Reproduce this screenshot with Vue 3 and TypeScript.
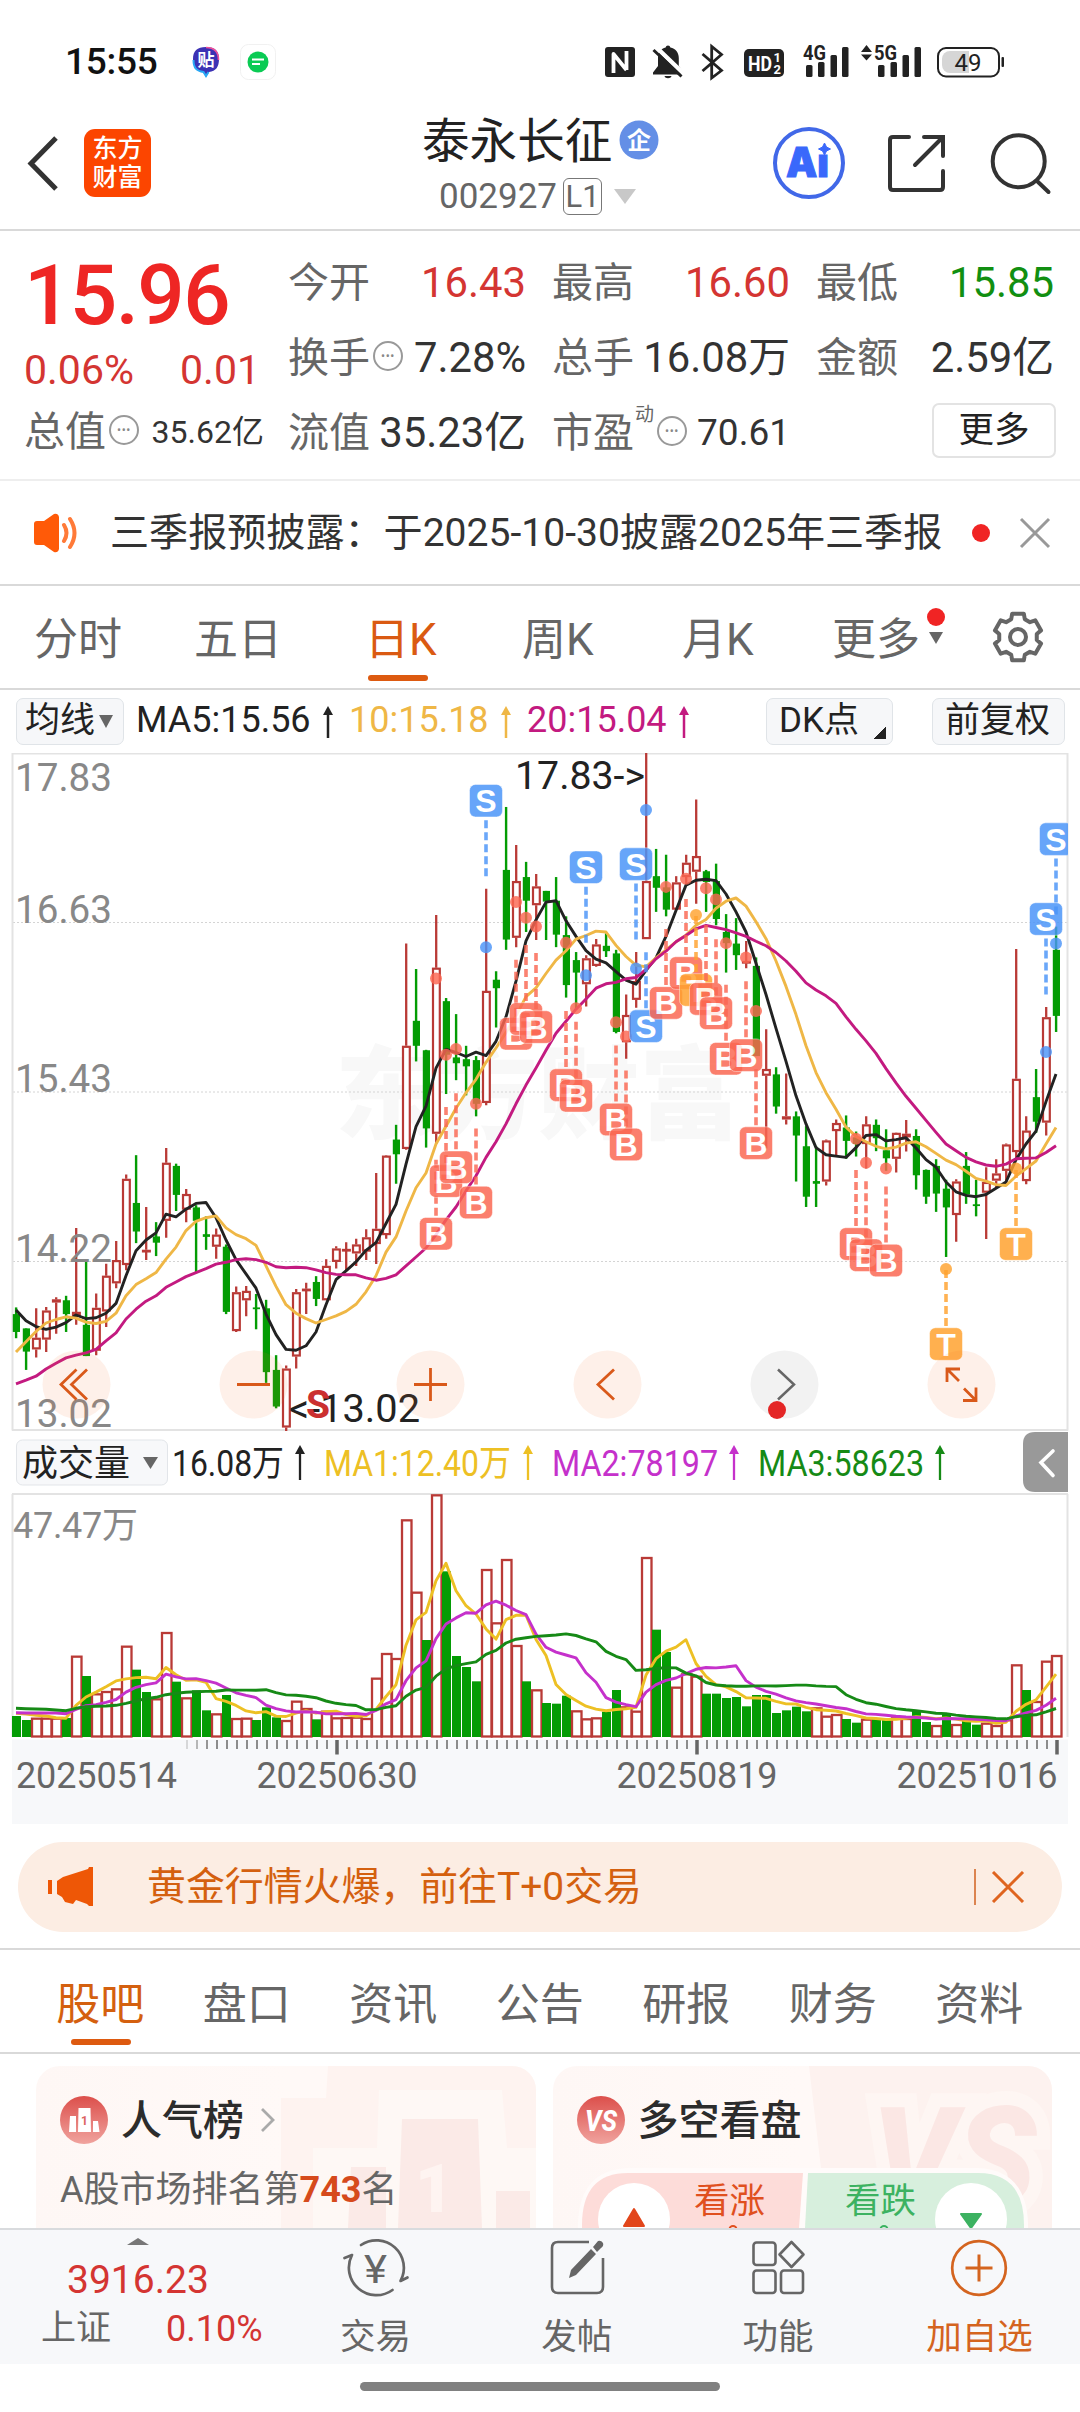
<script setup lang="ts">
type Kind = 'R' | 'G'
type Candle = [kind: Kind, high: number, top: number, bottom: number, low: number]
type Mark = { i: number; dot: number; at: number; t: 'B' | 'S' | 'T'; up?: boolean }

const candles: Candle[] = [
  ['G', 1271, 1286, 1326, 1340], ['G', 1318, 1318, 1370, 1411], ['R', 1273, 1339, 1365, 1383], ['R', 1270, 1278, 1343, 1371],
  ['R', 1248, 1253, 1260, 1330], ['G', 1245, 1255, 1286, 1326], ['R', 1093, 1281, 1290, 1310], ['G', 1168, 1310, 1380, 1380],
  ['R', 1240, 1272, 1368, 1378], ['R', 1173, 1200, 1280, 1315], ['R', 1122, 1165, 1217, 1228], ['R', 973, 983, 1176, 1188],
  ['G', 930, 1037, 1101, 1127], ['R', 1046, 1142, 1147, 1165], ['G', 1080, 1112, 1126, 1156], ['R', 914, 947, 1077, 1115],
  ['G', 949, 954, 1019, 1055], ['R', 1006, 1017, 1052, 1080], ['G', 1042, 1047, 1077, 1193], ['G', 1067, 1107, 1113, 1142],
  ['R', 1094, 1108, 1135, 1162], ['G', 1130, 1135, 1281, 1286], ['R', 1224, 1237, 1324, 1326], ['R', 1223, 1234, 1255, 1291],
  ['G', 1241, 1271, 1275, 1320], ['G', 1254, 1273, 1416, 1440], ['G', 1378, 1411, 1493, 1497], ['R', 1401, 1408, 1540, 1548],
  ['R', 1230, 1237, 1381, 1408], ['R', 1216, 1229, 1233, 1286], ['G', 1201, 1214, 1252, 1268], ['R', 1163, 1178, 1255, 1255],
  ['R', 1134, 1139, 1169, 1184], ['R', 1125, 1140, 1144, 1190], ['R', 1117, 1130, 1150, 1178], ['R', 1096, 1114, 1146, 1165],
  ['R', 970, 1095, 1129, 1174], ['R', 930, 931, 1109, 1117], ['G', 862, 895, 928, 994], ['R', 456, 685, 916, 918],
  ['G', 513, 629, 685, 720], ['G', 694, 695, 870, 913], ['R', 392, 510, 882, 905], ['G', 578, 585, 705, 793],
  ['G', 614, 711, 724, 762], ['G', 685, 715, 731, 796], ['G', 708, 717, 815, 843], ['R', 333, 562, 813, 818],
  ['G', 518, 537, 556, 644], ['G', 150, 291, 447, 470], ['R', 235, 316, 443, 464], ['G', 273, 307, 360, 430],
  ['R', 300, 328, 370, 448], ['G', 338, 338, 362, 448], ['G', 307, 360, 436, 464], ['G', 395, 437, 549, 577],
  ['G', 475, 493, 521, 602], ['R', 482, 489, 547, 597], ['R', 446, 458, 506, 508], ['G', 433, 461, 473, 486],
  ['G', 470, 478, 654, 657], ['R', 570, 616, 677, 714], ['R', 475, 540, 582, 600], ['R', 28, 316, 446, 446],
  ['G', 244, 305, 331, 385], ['G', 257, 330, 380, 395], ['R', 305, 319, 380, 380], ['R', 257, 275, 307, 322],
  ['R', 133, 260, 295, 367], ['G', 291, 294, 318, 385], ['G', 277, 316, 401, 415], ['G', 390, 430, 455, 521],
  ['G', 399, 456, 482, 515], ['R', 450, 495, 500, 511], ['G', 487, 506, 708, 708], ['R', 648, 737, 752, 915],
  ['G', 733, 749, 821, 837], ['R', 747, 843, 850, 861], ['G', 832, 843, 886, 989], ['G', 865, 910, 1023, 1046],
  ['G', 910, 988, 994, 1046], ['R', 895, 897, 989, 998], ['R', 850, 858, 876, 930], ['G', 841, 868, 898, 938],
  ['G', 877, 890, 905, 933], ['R', 843, 861, 905, 960], ['G', 850, 862, 892, 921], ['G', 872, 919, 937, 965],
  ['R', 879, 880, 938, 969], ['R', 851, 882, 890, 922], ['G', 872, 887, 975, 1007], ['G', 962, 963, 1023, 1039],
  ['G', 939, 954, 1016, 1057], ['G', 985, 1005, 1047, 1158], ['R', 984, 989, 1064, 1124], ['G', 923, 954, 1018, 1039],
  ['G', 985, 1040, 1044, 1067], ['R', 957, 990, 1014, 1118], ['R', 939, 971, 987, 1003], ['R', 904, 906, 965, 995],
  ['R', 468, 759, 923, 940], ['R', 843, 875, 988, 995], ['G', 737, 800, 855, 880], ['R', 598, 621, 857, 886],
  ['G', 418, 470, 618, 654],
]

const ma5 = [1277, 1301, 1314, 1320, 1315, 1305, 1288, 1296, 1294, 1284, 1262, 1200, 1144, 1120, 1104, 1062, 1068, 1051, 1038, 1036, 1070, 1120, 1164, 1196, 1228, 1286, 1332, 1365, 1367, 1357, 1326, 1265, 1209, 1189, 1169, 1143, 1126, 1083, 1040, 950, 866, 820, 735, 693, 700, 709, 699, 707, 675, 620, 540, 450, 403, 363, 360, 405, 440, 472, 491, 499, 519, 538, 547, 516, 488, 440, 382, 325, 314, 312, 315, 345, 385, 430, 500, 570, 646, 720, 797, 860, 913, 929, 932, 935, 913, 886, 884, 898, 895, 891, 914, 940, 957, 990, 1012, 1020, 1023, 1018, 1004, 990, 940, 905, 876, 810, 748]
const ma10 = [1371, 1348, 1325, 1306, 1298, 1292, 1295, 1304, 1307, 1302, 1284, 1245, 1220, 1207, 1193, 1163, 1136, 1099, 1078, 1070, 1066, 1093, 1108, 1117, 1132, 1178, 1224, 1265, 1284, 1296, 1306, 1298, 1290, 1280, 1264, 1236, 1200, 1147, 1113, 1055, 1003, 970, 905, 865, 825, 790, 760, 722, 690, 655, 618, 575, 555, 523, 493, 472, 446, 438, 428, 430, 460, 485, 505, 508, 488, 470, 452, 437, 415, 402, 377, 361, 354, 372, 407, 445, 495, 552, 615, 685, 745, 790, 827, 867, 888, 900, 910, 916, 912, 903, 900, 911, 926, 941, 951, 966, 982, 988, 996, 998, 977, 960, 943, 905, 868]
const ma20 = [1442, 1434, 1425, 1409, 1396, 1384, 1378, 1373, 1365, 1346, 1328, 1297, 1275, 1257, 1245, 1226, 1214, 1202, 1193, 1184, 1174, 1170, 1164, 1162, 1164, 1170, 1180, 1182, 1181, 1182, 1187, 1193, 1197, 1198, 1198, 1205, 1210, 1206, 1198, 1178, 1158, 1138, 1108, 1075, 1046, 1010, 976, 935, 900, 860, 815, 773, 735, 695, 657, 630, 603, 580, 556, 546, 543, 535, 532, 514, 490, 473, 452, 438, 423, 415, 420, 425, 432, 440, 451, 461, 476, 495, 518, 544, 560, 573, 590, 620, 648, 674, 702, 736, 768, 798, 825, 852, 879, 905, 920, 935, 945, 952, 955, 950, 938, 937, 936, 924, 909]

const marks: Mark[] = [
  { i: 42, dot: 534, at: 1106, t: 'B' }, { i: 43, dot: 705, at: 988, t: 'B' }, { i: 44, dot: 692, at: 957, t: 'B' },
  { i: 46, dot: 815, at: 1036, t: 'B' }, { i: 47, dot: 464, at: 136, t: 'S', up: true },
  { i: 50, dot: 363, at: 658, t: 'B' }, { i: 51, dot: 398, at: 625, t: 'B' }, { i: 52, dot: 418, at: 643, t: 'B' },
  { i: 55, dot: 454, at: 773, t: 'B' }, { i: 56, dot: 601, at: 797, t: 'B' }, { i: 57, dot: 527, at: 285, t: 'S', up: true },
  { i: 60, dot: 632, at: 850, t: 'B' }, { i: 61, dot: 664, at: 906, t: 'B' }, { i: 62, dot: 512, at: 278, t: 'S', up: true },
  { i: 63, dot: 157, at: 641, t: 'S' }, { i: 65, dot: 329, at: 589, t: 'B' }, { i: 67, dot: 311, at: 522, t: 'B' },
  { i: 68, dot: 392, at: 560, t: 'T' }, { i: 69, dot: 332, at: 580, t: 'B' }, { i: 70, dot: 357, at: 612, t: 'B' },
  { i: 71, dot: 455, at: 714, t: 'B' }, { i: 73, dot: 487, at: 706, t: 'B' }, { i: 74, dot: 607, at: 903, t: 'B' },
  { i: 84, dot: 893, at: 1129, t: 'B' }, { i: 85, dot: 947, at: 1154, t: 'B' }, { i: 87, dot: 960, at: 1166, t: 'B' },
  { i: 93, dot: 1185, at: 1353, t: 'T' }, { i: 100, dot: 960, at: 1129, t: 'T' },
  { i: 103, dot: 699, at: 401, t: 'S', up: true }, { i: 104, dot: 456, at: 222, t: 'S', up: true },
]
const markColor = { B: '#fb6752', S: '#4a94f8', T: '#ffa22e' }

const volTops = [858, 870, 863, 863, 863, 864, 677, 738, 790, 783, 775, 647, 719, 786, 805, 606, 755, 802, 781, 841, 850, 795, 864, 863, 870, 832, 862, 870, 812, 834, 868, 842, 862, 861, 860, 864, 743, 669, 684, 268, 485, 630, 193, 424, 678, 711, 754, 417, 577, 387, 645, 754, 778, 819, 821, 797, 841, 865, 862, 845, 780, 829, 842, 381, 599, 666, 770, 730, 737, 791, 791, 804, 801, 829, 795, 795, 849, 841, 830, 844, 832, 857, 852, 867, 878, 866, 865, 867, 862, 864, 843, 876, 885, 850, 882, 870, 884, 878, 885, 868, 703, 780, 813, 692, 675]
const volKinds = 'GGRRRGRGRRRRGGRRGRGGRGRRGGGRRRGRRRRRRRRRRGRGGGGRRRRGRGGGRRRGGRRRGGRRRGGGGGGGGGGGRRRGGRGGRRGGRGRGGRRRRGRRR'

const X = (i: number) => 16 + i * 10
const Y = (v: number) => 740 + v / 2.24
const V = (v: number) => 1430 + v / 3
const line = (a: number[], f: (v: number) => number) => a.map((v, i) => `${X(i)},${f(v).toFixed(1)}`).join(' ')

function volAverage(n: number, lead: number[]): number[] {
  return volTops.map((_, i) =>
    i < n - 1 ? lead[i] : volTops.slice(i - n + 1, i + 1).reduce((a, b) => a + b, 0) / n,
  )
}
const vma1 = volAverage(5, [850, 852, 856, 858])
const vma2 = volAverage(10, [848, 849, 849, 849, 849, 851, 838, 827, 824])
const vma3 = volAverage(20, [835, 836, 837, 838, 840, 842, 835, 830, 829, 828, 826, 820, 813, 806, 802, 794, 790, 787, 785])

const ticks = Array.from({ length: 88 }, (_, k) => k + 17)
const gridLabels = [
  { t: '17.83', y: 791 }, { t: '16.63', y: 923 }, { t: '15.43', y: 1092 }, { t: '14.22', y: 1261.5 }, { t: '13.02', y: 1427 },
]
const legend = [
  { t: '16.08万', x: 172, w: 112, c: '#222', a: 300 },
  { t: 'MA1:12.40万', x: 324, w: 187, c: '#edc024', a: 528 },
  { t: 'MA2:78197', x: 552, w: 166, c: '#c531cb', a: 734 },
  { t: 'MA3:58623', x: 758, w: 166, c: '#168a16', a: 940 },
]

const gear = Array.from({ length: 6 }, (_, k) => {
  const p = (r: number, d: number) => {
    const a = ((-90 + 60 * k + d) * Math.PI) / 180
    return `${(27 + r * Math.cos(a)).toFixed(2)},${(27 + r * Math.sin(a)).toFixed(2)}`
  }
  return [p(19, -21), p(24, -14), p(24, 14), p(19, 21)].join(' ')
}).join(' ')

const periods = ['分时', '五日', '日K', '周K', '月K']
const sections = ['股吧', '盘口', '资讯', '公告', '研报', '财务', '资料']
</script>

<template>
  <div class="app">
    <div class="status">
      <span class="clock">15:55</span>
      <svg class="tie" width="28" height="32" viewBox="0 0 28 32">
        <path d="M14 1C5 1 1 5 1 13c0 8 3 12 10 13l3 5 3-5c7-1 10-5 10-13C27 5 23 1 14 1z" fill="#3c32b4" />
        <path d="M14 1.500C22 1.500 26.500 6 26.500 14" fill="none" stroke="#ee4f9a" stroke-width="1.600" />
        <path d="M1.500 14c0 8 3 11 10 12l2.500 4 2.500-4" fill="none" stroke="#29a8f5" stroke-width="2" />
        <text x="14" y="20" text-anchor="middle" font-size="17" font-weight="700" fill="#fff">贴</text>
      </svg>
      <svg class="msg" width="36" height="36" viewBox="0 0 36 36">
        <rect x=".5" y=".5" width="35" height="35" rx="8" fill="#fff" stroke="#f1f1f1" />
        <circle cx="18" cy="18" r="10.500" fill="#0acb54" />
        <path d="M12 15.500h12M12 20h8" stroke="#fff" stroke-width="1.800" />
      </svg>
      <svg class="sys" width="410" height="44" viewBox="600 40 410 44">
        <rect x="605" y="47" width="30" height="30" rx="3" fill="#222" />
        <path d="M613.500 73V54l13 16M626.500 51v19" fill="none" stroke="#fff" stroke-width="3.800" stroke-linejoin="round" />
        <path d="M668 45.500a2.500 2.500 0 0 1 2.400 2c5 1 8.400 5 8.400 10.500v8l5 6.500v2H653v-2l5-6.500v-8c0-5.500 3.200-9.500 7.600-10.500a2.500 2.500 0 0 1 2.400-2zM664.500 76h7c-.6 3-6.400 3-7 0z" fill="#222" />
        <path d="M656 47l29 28" stroke="#fff" stroke-width="4.500" />
        <path d="M653.500 50l28 26.500" stroke="#222" stroke-width="3" />
        <path d="M702.500 54l19 16.500-9.800 7.500V46.500l9.800 8L702.500 71" fill="none" stroke="#222" stroke-width="2.800" />
        <rect x="744" y="49" width="40" height="28" rx="5" fill="#222" />
        <text x="748" y="71" font-size="21" font-weight="700" fill="#fff" textLength="24" lengthAdjust="spacingAndGlyphs">HD</text>
        <text x="773.500" y="62" font-size="13" font-weight="700" fill="#fff">1</text>
        <text x="773.500" y="74" font-size="13" font-weight="700" fill="#fff">2</text>
        <g fill="#222">
          <text x="803" y="60" font-size="19.500" font-weight="700" textLength="23" lengthAdjust="spacingAndGlyphs">4G</text>
          <rect x="806" y="65" width="6.500" height="12" rx="1.500" /><rect x="818" y="62" width="6.500" height="15" rx="1.500" />
          <rect x="830.500" y="55" width="6.500" height="22" rx="1.500" /><rect x="842" y="47" width="6.500" height="30" rx="1.500" />
          <path d="M861 52l5.500-7 5.500 7zM861 54.500h11l-5.500 6z" />
          <text x="874" y="60" font-size="19.500" font-weight="700" textLength="23" lengthAdjust="spacingAndGlyphs">5G</text>
          <rect x="878" y="65" width="6.500" height="12" rx="1.500" /><rect x="890.500" y="62" width="6.500" height="15" rx="1.500" />
          <rect x="902.500" y="55" width="6.500" height="22" rx="1.500" /><rect x="914.500" y="47" width="6.500" height="30" rx="1.500" />
          <rect x="1001.500" y="57" width="2.500" height="10" rx="1" />
        </g>
        <path d="M969 51h-19a8 8 0 0 0-8 8v6a8 8 0 0 0 8 8h19z" fill="#d6d6d6" />
        <rect x="938" y="48" width="61" height="28.500" rx="8" fill="none" stroke="#222" stroke-width="2" />
        <text x="968" y="71" text-anchor="middle" font-size="24" fill="#222">49</text>
      </svg>
    </div>

    <header class="top">
      <svg class="back" width="34" height="58" viewBox="0 0 34 58"><path d="M30 4L5 29.500 30 55" fill="none" stroke="#333" stroke-width="5" /></svg>
      <div class="logo"><span>东方</span><span>财富</span></div>
      <div class="title">
        <div class="name">泰永长征
          <svg width="40" height="40" viewBox="0 0 40 40"><circle cx="20" cy="20" r="19.500" fill="#648fe6" /><text x="20" y="28.500" text-anchor="middle" font-size="24" font-weight="700" fill="#fff">企</text></svg>
        </div>
        <div class="code">002927<span class="lv">L1</span><i class="tri-down pale"></i></div>
      </div>
      <svg class="ai" width="74" height="74" viewBox="0 0 74 74">
        <circle cx="37" cy="37" r="34" fill="#fff" stroke="#4168e8" stroke-width="4" />
        <text x="14" y="50.500" font-size="41" font-weight="900" fill="#3a68fb" stroke="#3a68fb" stroke-width="1" class="ai-text" textLength="43" lengthAdjust="spacingAndGlyphs">Aı</text>
        <path d="M52.500 17l2 4 4 2-4 2-2 4-2-4-4-2 4-2z" fill="#3a68fb" stroke="#3a68fb" />
      </svg>
      <svg class="share" width="62" height="62" viewBox="885 132 62 62">
        <path d="M909 137h-16q-3 0-3 3v47q0 3 3 3h47q3 0 3-3v-16M924 137h19v19M943 137l-28 28" fill="none" stroke="#333" stroke-width="4" stroke-linecap="round" />
      </svg>
      <svg class="search" width="64" height="64" viewBox="988 130 64 64">
        <circle cx="1018.700" cy="160.300" r="26" fill="none" stroke="#333" stroke-width="4" />
        <path d="M1037 180l11.500 11" stroke="#333" stroke-width="4" stroke-linecap="round" />
      </svg>
    </header>

    <section class="quote">
      <div class="main">
        <div class="price">15.96</div>
        <div class="chg"><span>0.06%</span><span>0.01</span></div>
        <div class="cap"><span class="lbl">总值</span><i class="more-dot">•••</i><span class="val s32">35.62亿</span></div>
      </div>
      <div class="grid">
        <div class="cell"><span class="lbl">今开</span><span class="val red">16.43</span></div>
        <div class="cell"><span class="lbl">最高</span><span class="val red">16.60</span></div>
        <div class="cell"><span class="lbl">最低</span><span class="val green">15.85</span></div>
        <div class="cell"><span class="lbl">换手</span><i class="more-dot">•••</i><span class="val">7.28%</span></div>
        <div class="cell"><span class="lbl">总手</span><span class="val">16.08万</span></div>
        <div class="cell"><span class="lbl">金额</span><span class="val">2.59亿</span></div>
        <div class="cell"><span class="lbl">流值</span><span class="val">35.23亿</span></div>
        <div class="cell"><span class="lbl">市盈</span><sup>动</sup><i class="more-dot tight">•••</i><span class="val s36">70.61</span></div>
        <div class="cell end"><button class="more-btn">更多</button></div>
      </div>
    </section>

    <section class="notice">
      <svg width="48" height="40" viewBox="0 0 48 40">
        <path d="M2 11q0-3 3-3h7l10-7q4-1 5 3v32q-1 4-5 3l-10-7H5q-3 0-3-3z" fill="#ff5a08" />
        <path d="M32 12q5 8 0 16M38 6q9 14 0 28" fill="none" stroke="#ff7a38" stroke-width="4" stroke-linecap="round" />
      </svg>
      <span class="txt">三季报预披露：于2025-10-30披露2025年三季报</span>
      <i class="dot"></i>
      <svg width="32" height="32" viewBox="0 0 32 32"><path d="M2 2l28 28M30 2L2 30" stroke="#999" stroke-width="3" /></svg>
    </section>

    <nav class="periods">
      <span v-for="p in periods" :key="p" :class="{ on: p === '日K' }">{{ p }}</span>
      <span class="pm">更多<i class="pm-dot"></i><i class="pm-tri"></i></span>
      <svg width="54" height="54" viewBox="0 0 54 54">
        <polygon :points="gear" fill="none" stroke="#666" stroke-width="4" stroke-linejoin="round" />
        <circle cx="27" cy="27" r="8" fill="none" stroke="#666" stroke-width="4" />
      </svg>
    </nav>

    <div class="ma-row">
      <button class="chip avg">均线<i class="tri-down"></i></button>
      <span class="m m5">MA5:15.56</span><svg width="12" height="32" viewBox="0 0 12 32"><path d="M6 32V6" stroke="#222" stroke-width="2.500" /><path d="M1 9l5-9 5 9z" fill="#222" /></svg>
      <span class="m m10">10:15.18</span><svg width="12" height="32" viewBox="0 0 12 32"><path d="M6 32V6" stroke="#efb746" stroke-width="2.500" /><path d="M1 9l5-9 5 9z" fill="#efb746" /></svg>
      <span class="m m20">20:15.04</span><svg width="12" height="32" viewBox="0 0 12 32"><path d="M6 32V6" stroke="#c31a80" stroke-width="2.500" /><path d="M1 9l5-9 5 9z" fill="#c31a80" /></svg>
      <button class="chip dk">DK点<i></i></button>
      <button class="chip fq">前复权</button>
    </div>

    <svg class="chart" width="1080" height="1071" viewBox="0 753 1080 1071">
      <defs><clipPath id="frame"><rect x="12" y="753" width="1056" height="680" /></clipPath></defs>
      <text x="335" y="1131" font-size="101.500" font-weight="900" fill="#f8f8f8">东方财富</text>
      <g stroke="#d4d4d4" stroke-width="1" stroke-dasharray="2 2">
        <path d="M13 922.500H1067M13 1092H1067M13 1261.500H1067" />
      </g>
      <path d="M12.500 753V1430.500M1067.500 753V1430.500M12 753.500H1068M12 1430H1068" fill="none" stroke="#e3e3e3" stroke-width="2" />

      <g>
        <template v-for="(c, i) in candles" :key="i">
          <template v-if="c[0] === 'G'">
            <rect :x="X(i) - 1.1" :y="Y(c[1])" width="2.400" :height="Y(c[4]) - Y(c[1])" fill="#049c04" />
            <rect :x="X(i) - 3.2" :y="Y(c[2])" width="7.200" :height="Y(c[3]) - Y(c[2])" fill="#049c04" />
          </template>
          <template v-else>
            <path :d="`M${X(i) + 0.2} ${Y(c[1])}V${Y(c[2])}M${X(i) + 0.2} ${Y(c[3])}V${Y(c[4])}`" stroke="#b93a36" stroke-width="2.300" />
            <rect :x="X(i) - 3" :y="Y(c[2]) + 1" width="6.800" :height="Math.max(Y(c[3]) - Y(c[2]) - 2, 0.6)" fill="#fff" stroke="#b93a36" stroke-width="2.200" />
          </template>
        </template>
      </g>
      <g fill="none" stroke-width="2.900" stroke-linejoin="round">
        <polyline :points="line(ma5, Y)" stroke="#222" />
        <polyline :points="line(ma10, Y)" stroke="#efb746" />
        <polyline :points="line(ma20, Y)" stroke="#c31a80" />
      </g>
      <text v-for="g in gridLabels" :key="g.t" x="15" :y="g.y" font-size="38" fill="#888" textLength="97" lengthAdjust="spacingAndGlyphs">{{ g.t }}</text>

      <g clip-path="url(#frame)">
        <g v-for="m in marks" :key="m.i + m.t">
          <circle :cx="X(m.i)" :cy="Y(m.dot)" r="6" :fill="markColor[m.t]" opacity=".82" />
          <path :d="m.up ? `M${X(m.i)} ${Y(m.at) + 19.5}v56` : `M${X(m.i)} ${Y(m.at) - 74}v56`" :stroke="markColor[m.t]" stroke-width="3.600" stroke-dasharray="8 4" opacity=".82" />
          <g opacity=".84">
            <rect :x="X(m.i) - 16.5" :y="Y(m.at) - 16.3" width="33" height="32.600" rx="6" :fill="markColor[m.t]" stroke="#fff" stroke-opacity=".5" />
            <text :x="X(m.i)" :y="Y(m.at) + 11.5" text-anchor="middle" font-size="32" font-weight="700" fill="#fff" class="arial">{{ m.t }}</text>
          </g>
        </g>
      </g>
      <text x="515" y="789" font-size="38" fill="#222" textLength="130" lengthAdjust="spacingAndGlyphs">17.83-&gt;</text>
      <text x="289" y="1421.500" font-size="38" fill="#222" textLength="131" lengthAdjust="spacingAndGlyphs">&lt;-13.02</text>
      <text x="306" y="1418" font-size="39" font-weight="700" fill="#cb3030">S</text>

      <g fill="#f86f2a" fill-opacity=".1">
        <circle cx="76.500" cy="1384.500" r="34" /><circle cx="253.500" cy="1384.500" r="34" /><circle cx="430.500" cy="1384.500" r="34" />
        <circle cx="607.500" cy="1384.500" r="34" /><circle cx="961.500" cy="1384.500" r="34" />
      </g>
      <circle cx="784.500" cy="1384.500" r="34" fill="#000" fill-opacity=".05" />
      <g fill="none" stroke="#d9591a" stroke-width="2.800">
        <path d="M76.500 1369.500l-15.500 15 15.500 15M87 1369.500l-15.500 15 15.500 15" />
        <path d="M237 1384.500h33M414 1384.500h33M430.500 1368v33" />
        <path d="M614 1369.500l-16 15 16 15" />
        <path d="M960 1369h-13v13M947 1369l12 12M963 1400.500h13v-13M976 1400.500l-12-12" />
      </g>
      <path d="M778 1369.500l16 15-16 15" fill="none" stroke="#666" stroke-width="2.500" />
      <circle cx="777" cy="1410" r="9" fill="#e42626" />

      <rect x="16.500" y="1440" width="151" height="45" rx="6" fill="#f7f8fa" stroke="#e2e5e9" />
      <text x="22" y="1476" font-size="36" fill="#222">成交量</text>
      <path d="M143 1457h15l-7.500 12z" fill="#666" />
      <g v-for="l in legend" :key="l.t">
        <text :x="l.x" y="1475.500" font-size="36.500" :fill="l.c" :textLength="l.w" lengthAdjust="spacingAndGlyphs">{{ l.t }}</text>
        <path :d="`M${l.a} 1480v-26`" :stroke="l.c" stroke-width="2.300" />
        <path :d="`M${l.a - 5} 1454l5-9 5 9z`" :fill="l.c" />
      </g>
      <path d="M1068 1432h-33q-12 0-12 12v36q0 12 12 12h33z" fill="#999" />
      <path d="M1053 1451l-12 11.500 12 13" fill="none" stroke="#fff" stroke-width="3.600" stroke-linecap="round" />

      <path d="M12.500 1494V1737M1067.500 1494V1737M12 1494H1068" fill="none" stroke="#e3e3e3" stroke-width="2" />
      <text x="13" y="1538" font-size="36" fill="#888" textLength="125">47.47万</text>
      <g>
        <template v-for="(v, i) in volTops" :key="i">
          <rect v-if="volKinds[i] === 'G'" :x="X(i) - 4" :y="V(v)" width="9" :height="1737 - V(v)" fill="#049c04" />
          <rect v-else :x="X(i) - 4" :y="V(v) + 1" width="9.500" :height="1735.500 - V(v)" fill="#fff" stroke="#b93a36" stroke-width="2.300" />
        </template>
      </g>
      <g fill="none" stroke-width="2.900" stroke-linejoin="round">
        <polyline :points="line(vma1, V)" stroke="#edc024" />
        <polyline :points="line(vma2, V)" stroke="#c531cb" />
        <polyline :points="line(vma3, V)" stroke="#168a16" />
      </g>
      <rect x="12" y="1739.500" width="1056" height="85" fill="#f7f8fa" />
      <g stroke="#8c8c8c" stroke-width="2">
        <path v-for="i in ticks" :key="i" :d="`M${X(i) + 1} 1740v9`" :opacity="Math.min(1, (i - 16) * 0.3)" />
      </g>
      <path d="M337 1740v14.500M697 1740v14.500M1057 1740v14.500" stroke="#666" stroke-width="3.500" />
      <g font-size="36" fill="#666">
        <text x="16" y="1788" textLength="161">20250514</text><text x="256.500" y="1788" textLength="161">20250630</text>
        <text x="616.500" y="1788" textLength="161">20250819</text><text x="896.500" y="1788" textLength="161">20251016</text>
      </g>
    </svg>

    <div class="banner-wrap">
      <div class="banner">
        <svg width="46" height="40" viewBox="48 1867 46 40"><path d="M48 1880h4v14h-4zM57 1881l6-4 25-8 1-2h4v39h-4l-2-2-11-4-3 4-8-2-3-5-5-3z" fill="#ee5706" /></svg>
        <span>黄金行情火爆，前往T+0交易</span>
        <i></i>
        <svg width="34" height="32" viewBox="0 0 34 32"><path d="M2 1l30 30M32 1L2 31" stroke="#df641f" stroke-width="3" /></svg>
      </div>
    </div>

    <nav class="sections"><span v-for="s in sections" :key="s" :class="{ on: s === '股吧' }">{{ s }}</span></nav>

    <div class="cards">
      <div class="card">
        <svg class="deco" width="260" height="162" viewBox="275 2066 260 162">
          <path d="M280 2228V2098h45l2-32h208v162z" fill="#fef3f0" />
          <path d="M312 2228v-80h64l2-58h123l5 58h29v80z" fill="#fef8f5" />
          <path d="M350 2167h35v61h-38zM401 2119h76l4 109h-84zM495 2191h34v37h-34z" fill="#fbeae7" />
          <text x="414" y="2212" font-size="66" font-weight="900" fill="#fef4f1">1</text>
        </svg>
        <div class="head">
          <svg width="48" height="48" viewBox="0 0 48 48">
            <defs><linearGradient id="rg" x1="0" y1="0" x2="0" y2="1"><stop offset="0" stop-color="#dc4f4b" /><stop offset="1" stop-color="#f0a39e" /></linearGradient></defs>
            <circle cx="24" cy="24" r="24" fill="url(#rg)" />
            <path d="M10 20h6v16H9zM18.500 12h12l.5 24H18zM33 25h5l1.500 11H33z" fill="#fff" />
            <text x="24.500" y="28.500" text-anchor="middle" font-size="12" font-weight="700" fill="#dc6460">1</text>
          </svg>
          <b>人气榜</b>
          <svg class="chev" width="16" height="26" viewBox="0 0 16 26"><path d="M2 2l11 11L2 24" fill="none" stroke="#aaa" stroke-width="2.800" /></svg>
        </div>
        <div class="rank">A股市场排名第<b>743</b>名</div>
      </div>
      <div class="card">
        <svg class="deco" width="244" height="162" viewBox="808 2066 244 162">
          <path d="M809 2066h243v162H828z" fill="#fdf2ef" />
          <text x="872" y="2206" font-size="138" font-weight="900" font-style="italic" fill="#fbe7e4" stroke="#fef6f3" stroke-width="28" paint-order="stroke" textLength="164" lengthAdjust="spacingAndGlyphs">VS</text>
        </svg>
        <div class="head">
          <svg width="48" height="48" viewBox="0 0 48 48"><circle cx="24" cy="24" r="24" fill="url(#rg)" /><text x="24" y="35" text-anchor="middle" font-size="29" font-weight="800" font-style="italic" fill="#fff" textLength="32" lengthAdjust="spacingAndGlyphs">VS</text></svg>
          <b>多空看盘</b>
        </div>
        <svg class="vote" width="452" height="62" viewBox="577 2166 452 62">
          <path d="M578 2228v-5q2-53 50-55h350q48 2 50 55v5z" fill="#fffbfa" />
          <path d="M582 2228v-3q0-52 46-52h175l-4 55z" fill="#fddcd9" /><path d="M808 2173h170q46 0 46 52v3H805z" fill="#d7efdd" />
          <circle cx="634" cy="2219" r="36" fill="#fff" /><circle cx="971" cy="2219" r="36" fill="#fff" />
          <path d="M634 2209l10 17h-20z" fill="#e2461b" stroke="#e2461b" stroke-width="2" stroke-linejoin="round" />
          <path d="M971 2228l-10-14h20z" fill="#3cb261" stroke="#3cb261" stroke-width="2" stroke-linejoin="round" />
          <text x="694" y="2213" font-size="35.500" fill="#e0501f">看涨</text><text x="845" y="2213" font-size="35.500" fill="#3cb261">看跌</text>
          <circle cx="733" cy="2229.500" r="3.500" fill="none" stroke="#e0501f" stroke-width="2" /><circle cx="884" cy="2229.500" r="3.500" fill="none" stroke="#3cb261" stroke-width="2" />
        </svg>
      </div>
    </div>

    <footer class="bar">
      <div class="index">
        <i class="tri-up"></i>
        <div class="iv">3916.23</div>
        <div class="ir"><span>上证</span><em>0.10%</em></div>
      </div>
      <div class="act">
        <svg width="68" height="60" viewBox="342 2238 68 60">
          <g fill="none" stroke="#666" stroke-width="2.700" stroke-linecap="round" stroke-linejoin="round">
            <path d="M361 2245a27.500 27.500 0 0 1 39.500 36l7-3.500" /><path d="M392.500 2290a27.500 27.500 0 0 1-40.500-35l-7.500 3" />
          </g>
          <text x="364" y="2283" font-size="39" fill="#666" textLength="23" lengthAdjust="spacingAndGlyphs">¥</text>
        </svg>
        <span>交易</span>
      </div>
      <div class="act">
        <svg width="60" height="60" viewBox="547 2238 60 60">
          <path d="M589 2242h-31q-6 0-6 6v39q0 6 6 6h39q6 0 6-6v-29" fill="none" stroke="#666" stroke-width="2.600" />
          <path d="M591 2249l5 5-20 21-7 3 2-8zM593 2247l5-6q3-1 5 2 1 3-2 5l-4 4z" fill="#666" />
        </svg>
        <span>发帖</span>
      </div>
      <div class="act">
        <svg width="60" height="60" viewBox="748 2238 60 60">
          <g fill="none" stroke="#666" stroke-width="2.600" stroke-linejoin="round">
            <rect x="753.500" y="2242.500" width="22" height="22.500" rx="3" /><rect x="753.500" y="2270.500" width="22" height="22.500" rx="3" /><rect x="781" y="2270.500" width="22" height="22.500" rx="3" />
            <path d="M791.500 2242l12 12.500-12 12.500-12-12.500z" />
          </g>
        </svg>
        <span>功能</span>
      </div>
      <div class="act add">
        <svg width="60" height="60" viewBox="0 0 60 60"><circle cx="30" cy="30" r="26.800" fill="none" stroke="#d4641f" stroke-width="2.700" /><path d="M30 16.500v27M16.500 30h27" stroke="#d4641f" stroke-width="3" /></svg>
        <span>加自选</span>
      </div>
    </footer>
    <div class="home"><i></i></div>
  </div>
</template>

<style>
body { background: #fff; }
</style>

<style scoped>
* { box-sizing: border-box; }
.app { width: 1080px; height: 2412px; overflow: hidden; background: #fff; color: #333; font-family: Roboto, "Noto Sans CJK SC", sans-serif; line-height: 1.2; display: flex; flex-direction: column; white-space: nowrap; }
.app > * { flex: none; }
svg { display: block; flex: none; }
i, em { font-style: normal; }
button { font-family: inherit; line-height: 1.2; padding: 0; margin: 0; color: #222; display: flex; align-items: center; }
.arial { font-family: "Liberation Sans", sans-serif; }

.status { height: 86px; display: flex; align-items: center; padding: 38px 0 0 65px; }
.clock { font-size: 37px; font-weight: 500; width: 97px; color: #111; letter-spacing: -.3px; }
.tie { margin: 0 0 0 30px; }
.msg { margin-left: 20px; }
.sys { margin-left: 324px; }

.top { height: 145px; border-bottom: 2px solid #d9d9d9; display: flex; align-items: center; padding: 10px 0 0 26px; }
.logo { width: 67px; height: 68px; margin-left: 24px; border-radius: 11px; background: #fc4500; color: #fff; font-size: 25px; font-weight: 500; line-height: 29px; display: flex; flex-direction: column; align-items: center; justify-content: center; padding-top: 1px; }
.title { margin-left: 271px; width: 241px; height: 120px; padding-top: 8px; }
.name { height: 62px; line-height: 62px; font-size: 47.600px; color: #222; display: flex; align-items: center; }
.name svg { margin: -4px 0 0 7px; }
.code { margin: 2px 0 0 17px; height: 44px; display: flex; align-items: center; font-size: 35px; color: #666; }
.lv { width: 39px; height: 37px; margin-left: 6px; border: 1.500px solid #777; border-radius: 6px; font-size: 31px; line-height: 35px; text-align: center; }
.tri-down { width: 0; height: 0; border: solid transparent; border-width: 13px 7.500px 0; border-top-color: #666; }
.tri-down.pale { margin-left: 12px; border-width: 15px 11px 0; border-top-color: #c8c8c8; }
.ai { margin-left: 109px; }
.ai-text { font-family: Inter, sans-serif; }
.share { margin-left: 39px; }
.search { margin-left: 41px; }

.quote { height: 250px; border-bottom: 2px solid #eee; display: flex; padding: 15px 26px 0 24px; }
.main { width: 264px; color: #d43532; }
.price { height: 99px; line-height: 99px; font-size: 83.500px; font-weight: 500; letter-spacing: -1.600px; color: #ee2624; }
.chg { height: 50px; line-height: 50px; width: 236px; font-size: 41px; display: flex; justify-content: space-between; }
.cap { height: 75px; display: flex; align-items: center; width: 240px; }
.grid { width: 766px; display: grid; grid-template-columns: repeat(3, 238px); grid-auto-rows: 75px; column-gap: 26px; }
.cell { display: flex; align-items: center; }
.cell.end { justify-content: flex-end; margin-right: -2px; }
.lbl { font-size: 41px; color: #666; }
.val { margin-left: auto; font-size: 41.800px; color: #333; }
.s32 { font-size: 32px; }
.s36 { font-size: 37px; }
.red { color: #d43532; }
.green { color: #118f11; }
.more-dot { width: 30px; height: 30px; margin: -6px 0 0 3px; border: 2px solid #999; border-radius: 50%; color: #888; font-size: 12px; line-height: 26px; text-align: center; letter-spacing: .6px; }
.more-dot.tight { margin-left: 0; }
sup { font-size: 19px; line-height: 20px; width: 22px; color: #666; margin: -38px 0 0 1px; }
.more-btn { width: 124px; height: 55px; justify-content: center; border: 2px solid #e3e3e3; border-radius: 7px; background: #fff; font-size: 35.500px; margin-top: -6px; }

.notice { height: 105px; border-bottom: 2px solid #d9d9d9; display: flex; align-items: center; padding-left: 32px; }
.notice .txt { margin-left: 30px; width: 862px; font-size: 39.100px; color: #333; padding-top: 2px; }
.dot { width: 18px; height: 18px; border-radius: 50%; background: #f02424; margin-right: 29px; }

.periods { height: 104px; border-bottom: 2px solid #d9d9d9; display: flex; align-items: center; padding: 0 0 0 34px; font-size: 44px; color: #666; }
.periods span { position: relative; flex: none; width: 160px; line-height: 100px; padding-top: 5px; }
.periods span:nth-child(2) { width: 171px; }
.periods span:nth-child(3) { width: 157px; }
.periods span:nth-child(4) { width: 160px; }
.periods span:nth-child(5) { width: 150px; }
.periods span.on { color: #da5a12; }
.periods span.on::after { content: ""; position: absolute; left: 3px; bottom: 9px; width: 60px; height: 6px; border-radius: 3px; background: #dd5a10; }
.pm-dot { position: absolute; left: 95px; top: 23px; width: 18px; height: 18px; border-radius: 50%; background: #f02424; }
.pm-tri { position: absolute; left: 97px; top: 47px; border: solid transparent; border-width: 12px 7px 0; border-top-color: #666; }
.periods svg { margin-left: -1px; }

.ma-row { height: 63px; display: flex; align-items: center; padding: 0 0 1px 16px; font-size: 36px; }
.ma-row > * { flex: none; }
.chip { height: 47px; border: 1.500px solid #e0e4e8; border-radius: 7px; background: #f6f7f9; font-size: 35px; }
.avg { width: 108px; padding-left: 8px; }
.avg .tri-down { margin-left: 4px; }
.m5 { margin-left: 12px; width: 186px; color: #222; }
.ma-row svg { margin-top: 2px; }
.m10 { margin-left: 15px; width: 151px; color: #efb746; }
.m20 { margin-left: 15px; width: 151px; color: #c31a80; }
.dk { position: relative; width: 127px; margin-left: 76px; padding-left: 12px; }
.dk i { position: absolute; right: 6px; bottom: 5px; width: 12px; height: 12px; background: linear-gradient(135deg, transparent 50%, #222 50%); }
.fq { width: 133px; margin-left: 39px; padding-left: 12px; }

.banner-wrap { height: 126px; border-bottom: 2px solid #d9d9d9; padding: 18px 18px 0; }
.banner { height: 90px; border-radius: 45px; background: #fcede3; display: flex; align-items: center; padding-left: 30px; color: #d4600f; font-size: 38.900px; }
.banner span { margin-left: 53px; width: 827px; }
.banner i { width: 2px; height: 36px; background: #dc8450; margin-right: 15px; }

.sections { height: 104px; border-bottom: 2px solid #d9d9d9; display: flex; padding-left: 27px; font-size: 44px; color: #666; }
.sections span { position: relative; width: 146.500px; text-align: center; line-height: 104px; padding-top: 3px; height: 102px; }
.sections .on { color: #d4600f; }
.sections .on::after { content: ""; position: absolute; left: 44px; bottom: 7px; width: 60px; height: 6px; border-radius: 3px; background: #dd5a10; }

.cards { height: 174px; padding: 12px 0 0 36px; display: flex; gap: 17px; }
.card { position: relative; width: 499.500px; height: 162px; border-radius: 24px 24px 0 0; background: linear-gradient(90deg, #fef7f5, #fff9f7 50%); overflow: hidden; padding: 24px 0 0 24px; }
.deco { position: absolute; right: 0; top: 0; }
.head { position: relative; height: 60px; display: flex; align-items: center; font-size: 41px; color: #2c2c2c; }
.head b { margin-left: 13px; padding-top: 3px; font-weight: 500; }
.chev { margin-left: 16px; }
.rank { position: relative; font-size: 36px; color: #666; line-height: 60px; margin-top: 10px; }
.rank b { color: #d64a1c; }
.vote { position: absolute; left: 24px; bottom: 0; }

.bar { height: 136px; border-top: 2px solid #d9dbde; background: #f7f8fa; display: flex; }
.index { width: 275px; padding-top: 8px; color: #d43532; }
.tri-up { display: block; width: 0; margin-left: 127px; border: solid transparent; border-width: 0 11px 7px; border-bottom-color: #777; }
.iv { margin-left: 67px; margin-top: 11px; font-size: 39px; line-height: 48px; }
.ir { display: flex; font-size: 35px; line-height: 50px; padding-left: 41px; }
.ir span { color: #666; width: 125px; }
.ir em { font-size: 36px; }
.act { width: 201.300px; display: flex; flex-direction: column; align-items: center; padding-top: 8px; font-size: 35.500px; color: #666; }
.act span { line-height: 50px; margin-top: 14px; }
.add { color: #d4641f; }
.home { height: 48px; display: flex; justify-content: center; padding-top: 18px; }
.home i { width: 360px; height: 9px; border-radius: 5px; background: #808080; }
</style>
